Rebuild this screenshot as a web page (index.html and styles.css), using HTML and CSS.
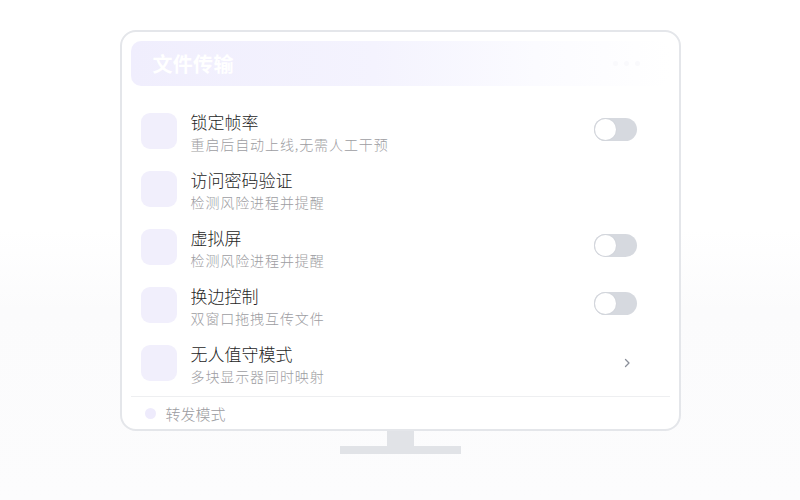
FILE: index.html
```html
<!doctype html>
<html lang="zh-CN">
<head>
  <meta charset="utf-8">
  <title>文件传输</title>
  <link rel="stylesheet" href="styles.css">
</head>
<body>
<div class="screen">
  <div class="monitor">
    <header class="banner">
      <h1>文件传输</h1>
      <div class="banner-dots"><span></span><span></span><span></span></div>
    </header>

    <ul class="list">
      <li class="row">
        <div class="icon"></div>
        <div class="text">
          <div class="title">锁定帧率</div>
          <div class="sub">重启后自动上线,无需人工干预</div>
        </div>
        <div class="toggle"></div>
      </li>
      <li class="row">
        <div class="icon"></div>
        <div class="text">
          <div class="title">访问密码验证</div>
          <div class="sub">检测风险进程并提醒</div>
        </div>
      </li>
      <li class="row">
        <div class="icon"></div>
        <div class="text">
          <div class="title">虚拟屏</div>
          <div class="sub">检测风险进程并提醒</div>
        </div>
        <div class="toggle"></div>
      </li>
      <li class="row">
        <div class="icon"></div>
        <div class="text">
          <div class="title">换边控制</div>
          <div class="sub">双窗口拖拽互传文件</div>
        </div>
        <div class="toggle"></div>
      </li>
      <li class="row">
        <div class="icon"></div>
        <div class="text">
          <div class="title">无人值守模式</div>
          <div class="sub">多块显示器同时映射</div>
        </div>
        <svg class="chevron" width="7" height="10" viewBox="0 0 7 10">
          <path d="M1.5 1.5 L5 5 L1.5 8.5" fill="none" stroke="#8a8f99" stroke-width="1.3" stroke-linecap="round" stroke-linejoin="round"/>
        </svg>
      </li>
    </ul>

    <footer class="foot">
      <span class="dot"></span>
      <span>转发模式</span>
    </footer>
  </div>
  <div class="neck"></div>
  <div class="base"></div>
</div>
</body>
</html>
```

FILE: styles.css
```css
* {
  box-sizing: border-box;
  margin: 0;
  padding: 0;
}
body {
  width: 800px;
  height: 500px;
  overflow: hidden;
  background: linear-gradient(180deg, #ffffff 0%, #ffffff 46%, #fbfbfc 62%, #fcfcfd 100%);
  font-family: "Noto Sans CJK SC", "Noto Sans", sans-serif;
  color: #2e2e2e;
}
.screen {
  display: flex;
  flex-direction: column;
  align-items: center;
  padding-top: 30px;
}
.monitor {
  width: 561px;
  height: 401px;
  background: #fff;
  border: 2px solid #e4e6ea;
  border-radius: 16px;
  padding: 9px 9px 0;
  display: flex;
  flex-direction: column;
}
.banner {
  height: 45px;
  border-radius: 10px;
  background: linear-gradient(90deg, #f0eefd 0%, #f4f3fe 45%, #fbfbff 75%, #ffffff 100%);
  display: flex;
  align-items: center;
  justify-content: space-between;
  padding: 0 22px;
}
.banner h1 {
  font-size: 20px;
  font-weight: 700;
  color: #fff;
  letter-spacing: 0.3px;
}
.banner-dots {
  display: flex;
  gap: 6px;
  margin-right: 8px;
}
.banner-dots span {
  width: 5px;
  height: 5px;
  border-radius: 50%;
  background: #f9f9fc;
}
.list {
  list-style: none;
  margin-top: 16px;
  padding: 0 10px;
}
.row {
  height: 58px;
  display: flex;
  align-items: center;
  gap: 14px;
}
.icon {
  width: 36px;
  height: 36px;
  flex: none;
  border-radius: 9px;
  background: #f1effc;
}
.text {
  padding-top: 3px;
}
.title {
  font-size: 17px;
  font-weight: 300;
  line-height: 22px;
  color: #262626;
}
.sub {
  font-size: 14px;
  font-weight: 300;
  line-height: 22px;
  color: #9d9da2;
  letter-spacing: 0.9px;
}
.toggle {
  margin-left: auto;
  margin-right: 23px;
  margin-bottom: 3px;
  width: 43px;
  height: 23px;
  border-radius: 12px;
  background: #d6d9df;
  position: relative;
}
.toggle::after {
  content: "";
  position: absolute;
  left: 1px;
  top: 1px;
  width: 21px;
  height: 21px;
  border-radius: 50%;
  background: #fff;
  box-shadow: 0 0 0 1px #d3d6dc;
}
.chevron {
  margin-left: auto;
  margin-right: 29px;
}
.foot {
  margin-top: 4px;
  border-top: 1px solid #eeeff1;
  height: 33px;
  display: flex;
  align-items: center;
  gap: 10px;
  padding-left: 14px;
  font-size: 15px;
  font-weight: 300;
  color: #9b9ba0;
}
.dot {
  width: 11px;
  height: 11px;
  border-radius: 50%;
  background: #eeebfc;
}
.neck {
  width: 27px;
  height: 15px;
  background: #e1e3e7;
}
.base {
  width: 121px;
  height: 8px;
  background: #e1e3e7;
}
```
